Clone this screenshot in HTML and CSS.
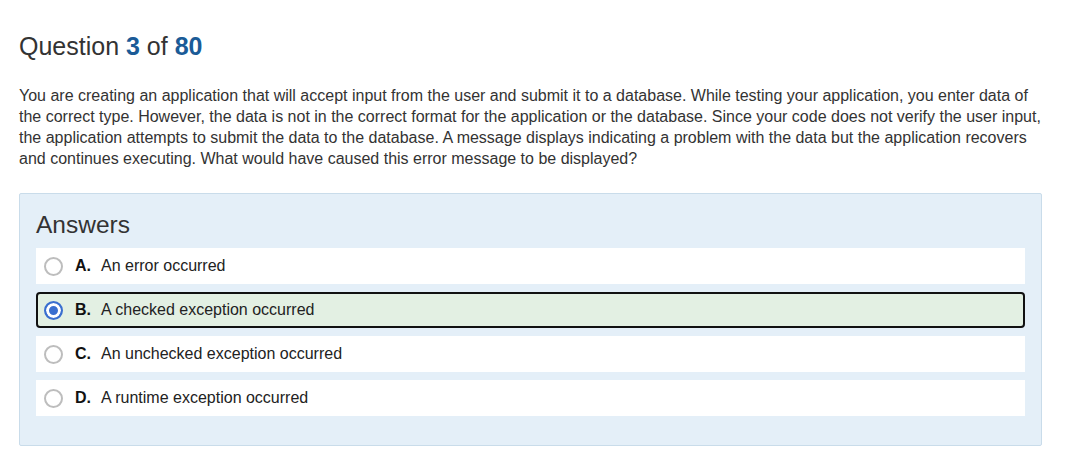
FILE: index.html
```html
<!DOCTYPE html>
<html>
<head>
<meta charset="utf-8">
<link rel="stylesheet" href="styles.css">
</head>
<body>
<div class="page">
  <h1 class="title">Question <b class="num">3</b> of <b class="num">80</b></h1>
  <p class="question">You are creating an application that will accept input from the user and submit it to a database. While testing your application, you enter data of the correct type. However, the data is not in the correct format for the application or the database. Since your code does not verify the user input, the application attempts to submit the data to the database. A message displays indicating a problem with the data but the application recovers and continues executing. What would have caused this error message to be displayed?</p>
  <div class="answers">
    <h2 class="answers-title">Answers</h2>
    <div class="option"><span class="radio"></span><b class="letter">A.</b><span class="text">An error occurred</span></div>
    <div class="option selected"><span class="radio checked"></span><b class="letter">B.</b><span class="text">A checked exception occurred</span></div>
    <div class="option"><span class="radio"></span><b class="letter">C.</b><span class="text">An unchecked exception occurred</span></div>
    <div class="option"><span class="radio"></span><b class="letter">D.</b><span class="text">A runtime exception occurred</span></div>
  </div>
</div>
</body>
</html>
```
FILE: styles.css
```css
html, body {
  margin: 0;
  padding: 0;
  background: #ffffff;
}
body {
  font-family: "Liberation Sans", Arial, sans-serif;
  color: #333333;
}
.page {
  padding: 32px 46px 0 19px;
}
.title {
  margin: 0;
  font-size: 25px;
  font-weight: normal;
  line-height: 28px;
  color: #333333;
}
.num {
  color: #1b5b97;
  font-weight: bold;
}
.question {
  margin: 25px 0 0 0;
  font-size: 16px;
  line-height: 21px;
  color: #333333;
}
.answers {
  margin-top: 24px;
  background: #e4eff8;
  border: 1px solid #c9dcea;
  border-radius: 2px;
  padding: 15px 16px 29px 16px;
}
.answers-title {
  margin: 0 0 7px 0;
  font-size: 24.5px;
  font-weight: normal;
  line-height: 32px;
  color: #333333;
}
.option {
  display: flex;
  align-items: center;
  height: 36px;
  background: #ffffff;
  margin-bottom: 8px;
  padding-left: 8px;
  box-sizing: border-box;
  font-size: 16px;
  color: #222222;
}
.option:last-child {
  margin-bottom: 0;
}
.option.selected {
  background: #e3f0e3;
  border: 2px solid #111111;
  border-radius: 4px;
  padding-left: 6px;
}
.radio {
  width: 15px;
  height: 15px;
  border: 2px solid #bdbdbd;
  border-radius: 50%;
  background: #ffffff;
  margin-right: 12px;
  flex: none;
  box-sizing: content-box;
}
.radio.checked {
  border-color: #3a6fcf;
  background: #3a6fcf;
  box-shadow: inset 0 0 0 3px #ffffff;
}
.letter {
  font-weight: bold;
  margin-right: 10px;
  color: #111111;
}
.text {
  color: #222222;
}
```
